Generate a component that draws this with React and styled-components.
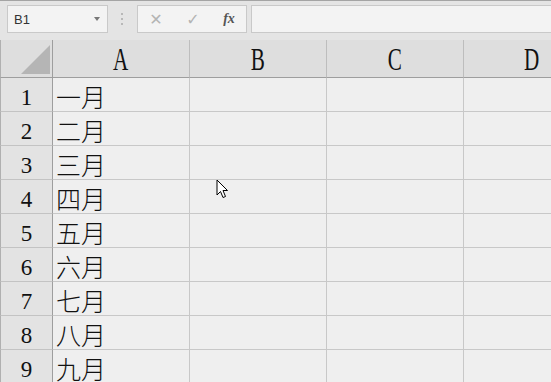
import React from 'react';
import styled, { createGlobalStyle } from 'styled-components';

const Global = createGlobalStyle`
  html, body {
    margin: 0;
    padding: 0;
    background: #efefef;
    overflow: hidden;
  }
`

const Page = styled.div`
  position: relative;
  width: 551px;
  height: 382px;
  overflow: hidden;
  font-family: "Liberation Serif", serif;
`

const Toolbar = styled.div`
  display: flex;
  align-items: center;
  height: 40px;
  box-sizing: border-box;
  border-top: 1px solid #a4a4a4;
  padding: 4px 0 7px 7px;
  background: #e4e4e4;
`

const Box = styled.div`
  display: flex;
  align-items: center;
  box-sizing: border-box;
  height: 28px;
  width: ${props => props.w};
  flex: ${props => props.grow ? 1 : 'none'};
  margin-left: ${props => props.ml || 0};
  background: #f3f3f3;
  border: 1px solid #c9c9c9;
  border-right: ${props => props.grow ? 'none' : '1px solid #c9c9c9'};
`

const NameText = styled.span`
  flex: 1;
  padding-left: 6px;
  font-family: "Liberation Sans", Arial, sans-serif;
  font-size: 13px;
  color: #333;
`

const Caret = styled.span`
  width: 0;
  height: 0;
  margin-right: 7px;
  border-left: 3.5px solid transparent;
  border-right: 3.5px solid transparent;
  border-top: 4px solid #777;
`

const Dots = styled.div`
  display: flex;
  flex-direction: column;
  gap: 3px;
  margin-left: 13px;
  span {
    width: 2px;
    height: 2px;
    background: #b8b8b8;
  }
`

const Btn = styled.span`
  width: ${props => props.w}px;
  text-align: center;
  color: ${props => props.dark ? '#555' : '#b4b4b4'};
  font-family: ${props => props.dark ? '"Liberation Serif", serif' : '"DejaVu Sans", sans-serif'};
  font-style: ${props => props.dark ? 'italic' : 'normal'};
  font-size: ${props => props.dark ? '14px' : '16px'};
  font-weight: ${props => props.dark ? 'bold' : 'normal'};
`

const Grid = styled.div`
  display: grid;
  grid-template-columns: 53px repeat(4, 137px);
  grid-auto-rows: 34px;
  grid-template-rows: 38px;
`

const Corner = styled.div`
  box-sizing: border-box;
  display: flex;
  align-items: flex-end;
  justify-content: flex-end;
  padding: 0 2px 3px 0;
  background: #dedede;
  border-right: 1px solid #9e9e9e;
  border-bottom: 1px solid #9e9e9e;
  border-left: 1px solid #b0b0b0;
`

const ColHead = styled.div`
  box-sizing: border-box;
  display: flex;
  justify-content: center;
  align-items: flex-end;
  background: #dedede;
  border-right: 1px solid #bdbdbd;
  border-bottom: 1px solid #9e9e9e;
  font-size: 32px;
  line-height: 32px;
  padding-bottom: 2px;
  color: #111;
  span {
    display: inline-block;
    transform: scaleX(0.66);
  }
`

const RowHead = styled.div`
  box-sizing: border-box;
  display: flex;
  justify-content: center;
  align-items: flex-end;
  padding-bottom: 2px;
  background: #e3e3e3;
  border-left: 1px solid #b0b0b0;
  border-right: 1px solid #9e9e9e;
  border-bottom: 1px solid #c3c3c3;
  font-size: 23px;
  line-height: 23px;
  color: #111;
`

const Cell = styled.div`
  box-sizing: border-box;
  display: flex;
  align-items: flex-end;
  padding: 0 0 0 3px;
  background: #efefef;
  border-right: 1px solid #c8c8c8;
  border-bottom: 1px solid #c8c8c8;
  font-family: "Noto Sans CJK SC", "Noto Sans CJK JP", sans-serif;
  font-size: 25px;
  font-weight: 300;
  line-height: 30px;
  color: #111;
`

const Pointer = styled.svg`
  position: absolute;
  left: 216px;
  top: 179px;
`

const months = ['一月', '二月', '三月', '四月', '五月', '六月', '七月', '八月', '九月'];
const cols = ['A', 'B', 'C', 'D'];

export default function App() {
  return (
    <Page>
      <Global />
      <Toolbar>
        <Box w="101px">
          <NameText>B1</NameText>
          <Caret />
        </Box>
        <Dots><span /><span /><span /></Dots>
        <Box w="110px" ml="14px">
          <Btn w={36}>✕</Btn>
          <Btn w={38}>✓</Btn>
          <Btn w={34} dark>fx</Btn>
        </Box>
        <Box grow ml="4px" />
      </Toolbar>
      <Grid>
        <Corner>
          <svg width="29" height="29" viewBox="0 0 29 29">
            <polygon points="0,29 29,29 29,0" fill="#b5b5b5" />
          </svg>
        </Corner>
        {cols.map(c => <ColHead key={c}><span>{c}</span></ColHead>)}
        {months.map((m, i) => (
          <React.Fragment key={m}>
            <RowHead>{i + 1}</RowHead>
            <Cell>{m}</Cell>
            <Cell />
            <Cell />
            <Cell />
          </React.Fragment>
        ))}
      </Grid>
      <Pointer width="13" height="21" viewBox="0 0 13 21">
        <path d="M1 1 L1 16 L4.5 12.5 L7 18.5 L9.5 17.5 L7 11.5 L11.5 11.5 Z" fill="#fff" stroke="#000" strokeWidth="1" strokeLinejoin="miter" />
      </Pointer>
    </Page>
  );
}
